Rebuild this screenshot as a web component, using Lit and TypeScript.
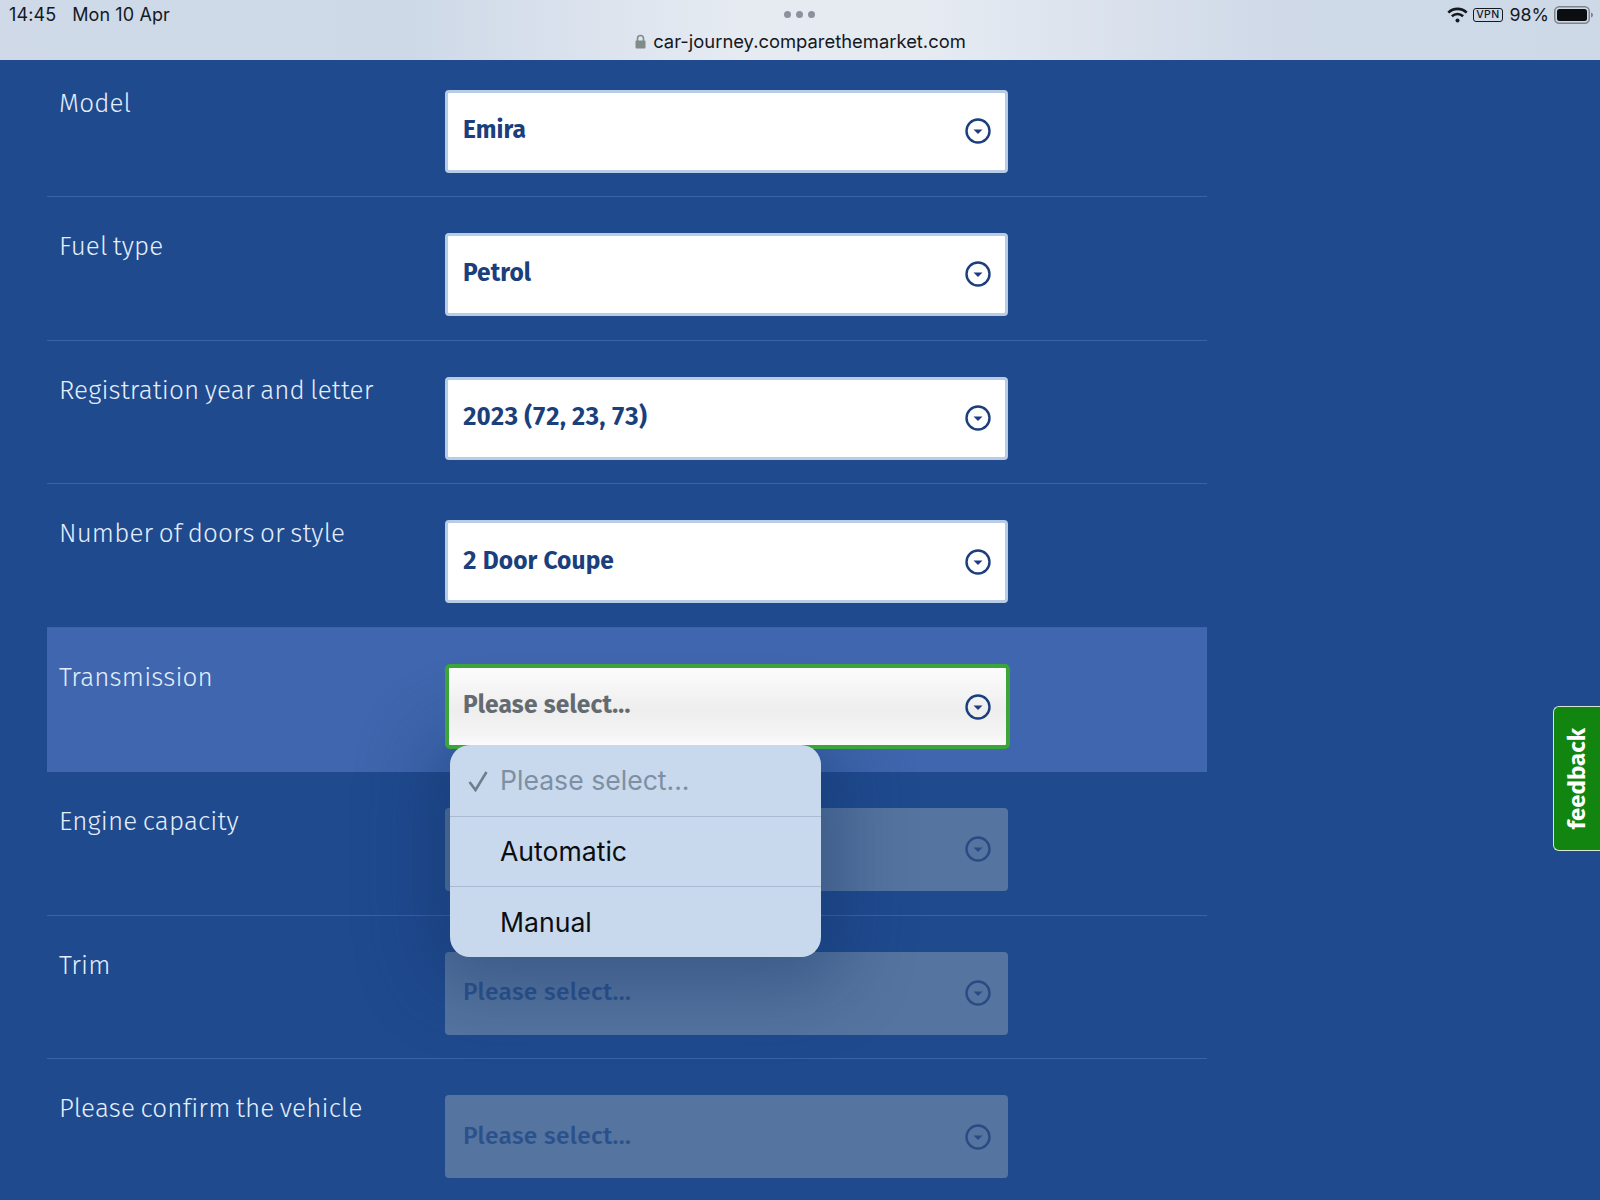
import { LitElement, html, css } from "lit";
import { customElement } from "lit/decorators.js";

const rows = [
  { label: "Model", value: "Emira", state: "filled" },
  { label: "Fuel type", value: "Petrol", state: "filled" },
  { label: "Registration year and letter", value: "2023 (72, 23, 73)", state: "filled" },
  { label: "Number of doors or style", value: "2 Door Coupe", state: "filled" },
  { label: "Transmission", value: "Please select...", state: "focus" },
  { label: "Engine capacity", value: "", state: "disabled" },
  { label: "Trim", value: "Please select...", state: "disabled" },
  { label: "Please confirm the vehicle", value: "Please select...", state: "disabled" },
];

@customElement("app-root")
export class AppRoot extends LitElement {
  static styles = css`
    :host { display: block; position: relative; width: 1600px; height: 1200px; overflow: hidden; background: #1f4a8e; font-family: "Inter", "Liberation Sans", sans-serif; }
    .bar { height: 60px; box-sizing: border-box; background: linear-gradient(90deg, #cfd9e8 0%, #ced9e8 26%, #e6ebf2 46%, #e6ebf2 58%, #cfd9e8 80%, #ced9e8 100%); display: grid; grid-template-columns: 1fr auto 1fr; color: #14181f; position: relative; z-index: 5; }
    .left { display: flex; gap: 16px; padding: 4px 0 0 9px; font-size: 18px; line-height: 22px; letter-spacing: .1px; }
    .center { display: flex; flex-direction: column; align-items: center; padding-top: 11px; }
    .dots { display: flex; gap: 5px; }
    .dots i { width: 7px; height: 7px; border-radius: 50%; background: #8b929d; }
    .url { display: flex; align-items: center; gap: 7px; font-size: 18.4px; line-height: 24px; margin-top: 11px; margin-left: 1px; }
    .right { display: flex; justify-content: flex-end; align-items: flex-start; padding: 5px 6px 0 0; gap: 7px; font-size: 17.8px; line-height: 20px; }
    .vpn { border: 1.5px solid #14181f; border-radius: 3px; font-size: 10.5px; line-height: 10px; height: 10px; padding: 1px 2px; font-weight: 500; margin-top: 3px; letter-spacing: .4px; }
    .wifi { margin-top: 2px; margin-right: -2px; }
    .batt { margin-left: -2px; margin-top: 1px; }
    .list { width: 1160px; margin-left: 47px; }
    .row { height: 143.75px; box-sizing: border-box; padding: 36px 0 0 12px; border-bottom: 1px solid #3a63a6; display: grid; grid-template-columns: 386px 563px; }
    .row:first-child { height: 136.75px; padding-top: 29.5px; }
    .row.focus { background: #3f66ae; border-bottom-color: transparent; }
    .label { font-family: "Fira Sans", "Lato", sans-serif; font-weight: 300; font-size: 26px; line-height: 32px; letter-spacing: .15px; word-spacing: -2px; color: #e4eefa; margin-top: -2px; white-space: nowrap; }
    .select { height: 83px; box-sizing: border-box; border: 3px solid #b8cce6; border-radius: 4px; background: #fff; display: flex; align-items: center; justify-content: space-between; padding: 0 14px 0 15px; color: #1b3f7c; font-family: "Fira Sans", "Noto Sans", sans-serif; }
    .value { font-weight: 700; font-size: 24.5px; letter-spacing: .1px; margin-top: -3px; white-space: nowrap; font-variant-numeric: tabular-nums; }
    .focus .select { position: relative; z-index: 3; height: 85px; width: 565px; border: 4px solid #3ba53a; background: linear-gradient(180deg, #fcfcfc, #eeeeee 55%, #f4f4f4 85%, #fbfbfb); padding: 0 15px 0 14px; border-radius: 5px; }
    .focus .value { color: #646b70; margin-top: -5px; letter-spacing: .2px; }
    .disabled .select { background: #55749f; border-color: #55749f; }
    .disabled .value { color: #2b518c; font-weight: 500; letter-spacing: .3px; }
    .shade { position: absolute; left: 450px; top: 745px; width: 371px; height: 212px; border-radius: 20px; box-shadow: 0 8px 70px 22px rgba(17, 50, 100, .4); z-index: 2; }
    .popup { position: absolute; left: 450px; top: 745px; width: 371px; height: 212px; border-radius: 20px; background: #c8d9ed; display: flex; flex-direction: column; color: #0b0d11; font-size: 26.6px; z-index: 4; overflow: hidden; }
    .opt { height: 71px; box-sizing: border-box; display: flex; align-items: center; padding-left: 50px; position: relative; }
    .opt + .opt { border-top: 1px solid #a9bad3; }
    .opt.sel { color: #7f8fa3; }
    .check { position: absolute; left: 17px; top: 25px; }
    .feedback { position: absolute; right: 0; top: 706px; width: 47px; height: 145px; box-sizing: border-box; background: #118510; border: 1px solid #d5e6d5; border-right: 0; border-radius: 6px 0 0 6px; color: #fff; display: flex; align-items: center; justify-content: center; }
    .feedback span { writing-mode: vertical-rl; transform: rotate(180deg); font-family: "Fira Sans", "Noto Sans", sans-serif; font-weight: 700; font-size: 24px; }
  `;

  private arrow(faded: boolean) {
    return html`<svg width="26" height="26" viewBox="0 0 26 26" fill="none" style="flex:none;opacity:${faded ? 0.75 : 1}">
      <circle cx="13" cy="13" r="11.5" stroke="#1b3f7c" stroke-width="2.4"></circle>
      <path d="M8.5 11.5h9L13 16z" fill="#1b3f7c"></path>
    </svg>`;
  }

  render() {
    return html`
      <div class="bar">
        <div class="left"><span>14:45</span><span>Mon 10 Apr</span></div>
        <div class="center">
          <div class="dots"><i></i><i></i><i></i></div>
          <div class="url">
            <svg width="11" height="15" viewBox="0 0 11 15"><path d="M2.5 7V4.5a3 3 0 0 1 6 0V7" fill="none" stroke="#7f8c8a" stroke-width="1.6"></path><rect x="0.5" y="6.5" width="10" height="8" rx="1" fill="#7f8c8a"></rect></svg>
            <span>car-journey.comparethemarket.com</span>
          </div>
        </div>
        <div class="right">
          <svg class="wifi" width="21" height="16" viewBox="0 0 21 16" fill="none" stroke="#14181f" stroke-width="2.6"><path d="M1.3 5.6a13.2 13.2 0 0 1 18.4 0"></path><path d="M4.9 9.2a8.2 8.2 0 0 1 11.2 0"></path><circle cx="10.5" cy="13.4" r="2" fill="#14181f" stroke="none"></circle></svg>
          <span class="vpn">VPN</span>
          <span>98%</span>
          <svg class="batt" width="40" height="18" viewBox="0 0 40 18"><rect x="0.75" y="0.75" width="34.5" height="16.5" rx="4.5" fill="none" stroke="#7d828b" stroke-width="1.5"></rect><rect x="3" y="3" width="30" height="12" rx="2.5" fill="#0b0d11"></rect><path d="M37 6.5c1.3.4 2 1.3 2 2.5s-.7 2.1-2 2.5z" fill="#7d828b"></path></svg>
        </div>
      </div>
      <div class="list">
        ${rows.map(
          (r) => html`<div class="row ${r.state}">
            <div class="label">${r.label}</div>
            <div class="select"><span class="value">${r.value}</span>${this.arrow(r.state === "disabled")}</div>
          </div>`
        )}
      </div>
      <div class="shade"></div>
      <div class="popup">
        <div class="opt sel">
          <svg class="check" width="22" height="22" viewBox="0 0 22 22" fill="none"><path d="M2.5 12l6 8L19.5 2" stroke="#6f7d8d" stroke-width="2.6"></path></svg>
          Please select...
        </div>
        <div class="opt">Automatic</div>
        <div class="opt">Manual</div>
      </div>
      <div class="feedback"><span>feedback</span></div>
    `;
  }
}
